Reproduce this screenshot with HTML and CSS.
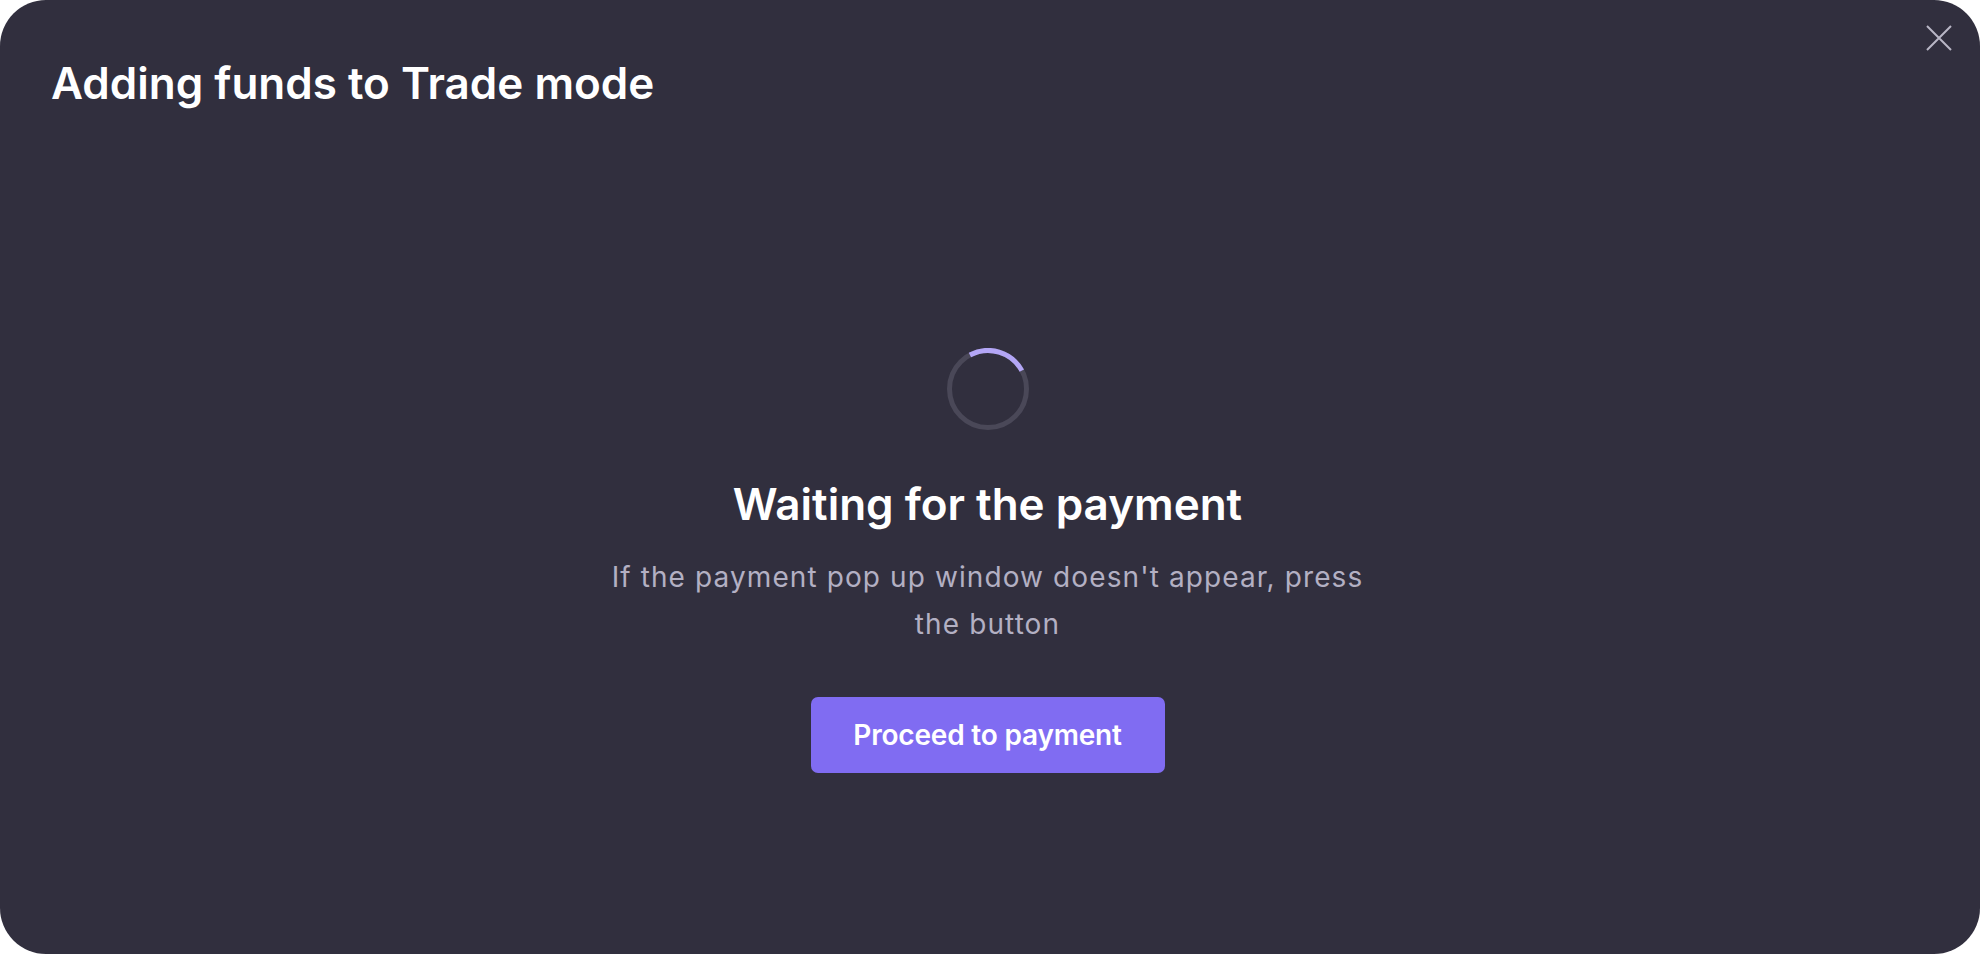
FILE: index.html
```html
<!DOCTYPE html>
<html lang="en">
<head>
    <meta charset="UTF-8">
    <title>Adding funds to Trade mode</title>
    <link rel="stylesheet" href="styles.css">
</head>
<body>
    <div class="modal">
        <div class="modal-header">
            <h1 class="modal-title">Adding funds to Trade mode</h1>
            <button class="close" aria-label="Close">
                <svg width="26" height="26" viewBox="0 0 26 26">
                    <path d="M1 1 L25 25 M25 1 L1 25" stroke="currentColor" stroke-width="2" fill="none"/>
                </svg>
            </button>
        </div>

        <div class="modal-body">
            <!-- Loading spinner -->
            <svg class="spinner" width="82" height="82" viewBox="0 0 82 82">
                <circle class="spinner-track" cx="41" cy="41" r="38.5"/>
                <circle class="spinner-arc" cx="41" cy="41" r="38.5" transform="rotate(-118 41 41)"/>
            </svg>
            <h2 class="status-title">Waiting for the payment</h2>
            <p class="status-text">If the payment pop up window doesn't appear, press the button</p>
            <button class="pay-button">Proceed to payment</button>
        </div>
    </div>
</body>
</html>
```

FILE: styles.css
```css
body {
    margin: 0;
    padding: 0;
    background-color: #ffffff;
    font-family: Inter, "Noto Sans", sans-serif;
    color: white;
}
.modal {
    height: 100vh;
    background-color: #312f3e;
    border-radius: 46px;
    display: flex;
    flex-direction: column;
    box-sizing: border-box;
}
.modal-header {
    display: flex;
    justify-content: space-between;
    align-items: flex-start;
    padding: 25px 28px 0 51px;
}
.modal-title {
    margin: 31px 0 0 0;
    font-size: 44px;
    font-weight: 600;
    line-height: 54px;
}
.close {
    background: none;
    border: none;
    padding: 0;
    width: 26px;
    height: 26px;
    color: #b9b7c6;
    cursor: pointer;
}
.close svg {
    display: block;
}
.modal-body {
    display: flex;
    flex-direction: column;
    align-items: center;
    text-align: center;
    padding: 238px 5px 0 0;
}
.spinner circle {
    fill: none;
    stroke-width: 5;
}
.spinner-track {
    stroke: #4a4858;
}
.spinner-arc {
    stroke: #b3a6f6;
    stroke-dasharray: 60 242;
}
.status-title {
    margin: 47px 0 0 0;
    font-size: 44px;
    font-weight: 600;
    line-height: 54px;
}
.status-text {
    margin: 23px 0 0 0;
    max-width: 780px;
    font-size: 28px;
    line-height: 47px;
    font-weight: 400;
    letter-spacing: 1.1px;
    color: #b3b0c3;
}
.pay-button {
    margin-top: 49px;
    width: 354px;
    height: 76px;
    background-color: #806cf2;
    color: white;
    border: none;
    border-radius: 7px;
    font-family: inherit;
    font-size: 28px;
    font-weight: 600;
    letter-spacing: -0.2px;
    cursor: pointer;
}
```
